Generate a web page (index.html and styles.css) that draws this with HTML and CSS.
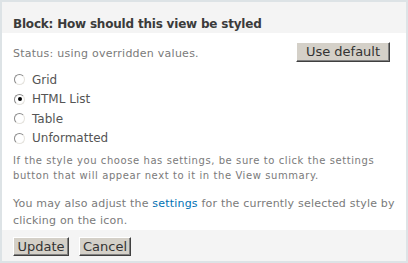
FILE: index.html
```html
<!DOCTYPE html>
<html>
<head>
<meta charset="utf-8">
<link rel="stylesheet" href="styles.css">
</head>
<body>
<div class="panel">
  <div class="header">Block: How should this view be styled</div>
  <div class="body">
    <div class="status-row">
      <span class="status">Status: using overridden values.</span>
      <span class="btn btn-default">Use default</span>
    </div>
    <div class="options">
      <div class="opt"><span class="radio"></span><span class="label">Grid</span></div>
      <div class="opt"><span class="radio checked"></span><span class="label">HTML List</span></div>
      <div class="opt"><span class="radio"></span><span class="label">Table</span></div>
      <div class="opt"><span class="radio"></span><span class="label">Unformatted</span></div>
    </div>
    <p class="desc">If the style you choose has settings, be sure to click the settings button that will appear next to it in the View summary.</p>
    <p class="note">You may also adjust the <a class="link">settings</a> for the currently selected style by clicking on the icon.</p>
  </div>
  <div class="footer">
    <span class="btn">Update</span>
    <span class="btn">Cancel</span>
  </div>
</div>
</body>
</html>
```

FILE: styles.css
```css
html, body { margin: 0; padding: 0; background: #fff; }
body { font-family: "DejaVu Sans", Verdana, sans-serif; color: #494949; }
.panel {
  width: 404px;
  height: 259px;
  border: 2px solid #dde3e6;
  display: flex;
  flex-direction: column;
}
.header {
  background: #f4f4f4;
  height: 31px;
  flex: none;
  box-sizing: border-box;
  padding: 16px 0 0 11px;
  font-weight: bold;
  font-size: 12px;
  line-height: 13px;
  letter-spacing: -0.2px;
  color: #3b3b3b;
}
.body {
  flex: 1;
  padding: 0 11px;
  color: #777;
}
.status-row {
  display: flex;
  justify-content: space-between;
  align-items: center;
  height: 34px;
  padding-top: 5px;
  box-sizing: border-box;
}
.status { font-size: 11px; letter-spacing: 0.25px; color: #7a7a7a; margin-top: 2px; }
.btn {
  display: inline-block;
  box-sizing: border-box;
  background: #d4d0c8;
  color: #333;
  font-size: 13px;
  line-height: 17px;
  height: 19px;
  padding: 0 5px;
  border: 1px solid;
  border-color: #fff #404040 #404040 #fff;
  box-shadow: inset -1px -1px 0 #808080;
  text-align: center;
}
.btn-default { margin-right: 5px; margin-bottom: 1px; width: 94px; height: 20px; line-height: 18px; padding: 0; }
.options { padding-top: 3px; }
.opt {
  display: flex;
  align-items: center;
  height: 19.5px;
  font-size: 12px;
  color: #555;
}
.radio {
  width: 11px;
  height: 11px;
  border-radius: 50%;
  box-sizing: border-box;
  border: 1px solid;
  border-color: #8a8a8a #e4e2dc #e4e2dc #8a8a8a;
  background: #fff;
  margin: 0 7px 0 1px;
  position: relative;
}
.radio.checked::after {
  content: "";
  position: absolute;
  left: 2.5px; top: 2.5px;
  width: 4px; height: 4px;
  border-radius: 50%;
  background: #000;
}
.desc {
  font-size: 10px;
  line-height: 15px;
  letter-spacing: 0.58px;
  margin: 5px 0 0;
  color: #7a7a7a;
}
.note {
  font-size: 11px;
  line-height: 17px;
  letter-spacing: 0.2px;
  margin: 12px 0 0;
  color: #7a7a7a;
}
.link { color: #0071b3; text-decoration: none; }
.footer {
  background: #f4f4f4;
  height: 31px;
  flex: none;
  box-sizing: border-box;
  padding: 7px 0 0 11px;
  display: flex;
  gap: 10px;
  align-items: flex-start;
}
.footer .btn:first-child { width: 56px; padding: 0; }
.footer .btn:last-child { width: 52px; padding: 0; }
```
